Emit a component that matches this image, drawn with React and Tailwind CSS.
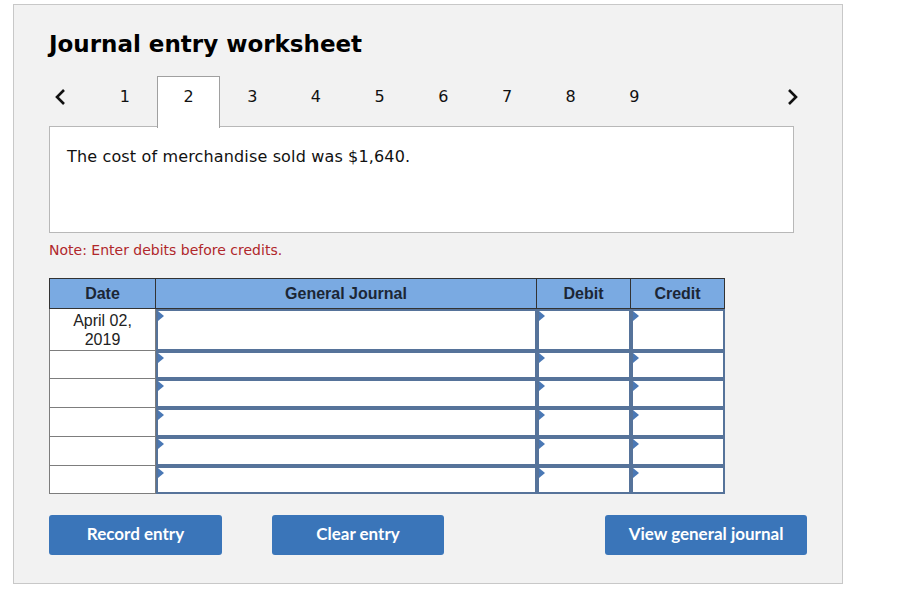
import React from 'react';

const tabs = [1, 2, 3, 4, 5, 6, 7, 8, 9];
const rowHeights = ['h-[42px]', 'h-[28px]', 'h-[29px]', 'h-[29px]', 'h-[29px]', 'h-[28px]'];

const InputCell = ({ h }) => (
  <div className={`relative bg-white border-2 border-[#56739a] ${h}`}>
    <span className="absolute left-0 top-0 w-0 h-0 border-y-[5px] border-y-transparent border-l-[6px] border-l-[#4a78b5]" />
  </div>
);

const App = () => {
  return (
    <div className="bg-white w-[897px] h-[608px] pl-[13px] pt-[4px] font-['DejaVu_Sans',sans-serif]">
      <div className="w-[830px] h-[580px] bg-[#f2f2f2] border border-[#c8c8c8] pl-[35px] pt-[24px]">
        <h1 className="text-[23px] leading-[30px] font-bold text-black">Journal entry worksheet</h1>

        <div className="flex items-stretch h-[51px] mt-[17px] w-[744px] relative z-10">
          <div className="w-[44px] flex items-center pl-[5px] pb-[10px] text-black">
            <svg width="14" height="18" viewBox="0 0 14 18"><path d="M10 2 L3 9 L10 16" stroke="#111" strokeWidth="2.6" fill="none" /></svg>
          </div>
          {tabs.map((t) => (
            <div
              key={t}
              className={`w-[63.7px] flex items-center justify-center text-[16px] text-[#111] ${t === 2 ? 'bg-white border border-b-0 border-[#a0a0a0] h-[52px] pb-[11px]' : 'pb-[10px]'}`}
            >
              {t}
            </div>
          ))}
          <div className="flex-1 flex items-center justify-end pb-[10px]">
            <svg width="14" height="18" viewBox="0 0 14 18" className="mr-[-6px]"><path d="M4 2 L11 9 L4 16" stroke="#111" strokeWidth="2.6" fill="none" /></svg>
          </div>
        </div>

        <div className="w-[745px] h-[107px] bg-white border border-[#b8b8b8] -mt-[1px] pl-[17px] pt-[18px] text-[16px] tracking-[0.15px] text-[#111]">
          The cost of merchandise sold was $1,640.
        </div>

        <p className="text-[14px] text-[#b0272b] mt-[8px] leading-[18px]">Note: Enter debits before credits.</p>

        <div className="mt-[19px] w-[676px] grid grid-cols-[107px_381px_94px_94px] font-['Liberation_Sans',sans-serif]">
          {['Date', 'General Journal', 'Debit', 'Credit'].map((h) => (
            <div key={h} className="h-[31px] bg-[#7aaae2] border border-[#333] -ml-[1px] first:ml-0 flex items-center justify-center text-[16px] font-bold text-[#1c2635]">
              {h}
            </div>
          ))}
          {rowHeights.map((h, i) => (
            <React.Fragment key={i}>
              <div className={`bg-white border border-[#7d7d7d] border-t-0 ${h} text-[16px] text-[#222] text-center leading-[19px] pt-[2px]`}>
                {i === 0 ? <>April 02,<br />2019</> : null}
              </div>
              <InputCell h={h} />
              <InputCell h={h} />
              <InputCell h={h} />
            </React.Fragment>
          ))}
        </div>

        <div className="flex mt-[21px] w-[758px] font-['Lato',sans-serif]">
          <button className="w-[173px] h-[40px] rounded-[3px] bg-[#3a75b9] text-white text-[17px] font-bold pb-[2px]">Record entry</button>
          <button className="w-[172px] h-[40px] rounded-[3px] bg-[#3a75b9] text-white text-[17px] font-bold pb-[2px] ml-[50px]">Clear entry</button>
          <button className="w-[202px] h-[40px] rounded-[3px] bg-[#3a75b9] text-white text-[17px] font-bold pb-[2px] ml-auto">View general journal</button>
        </div>
      </div>
    </div>
  );
};

export default App;
